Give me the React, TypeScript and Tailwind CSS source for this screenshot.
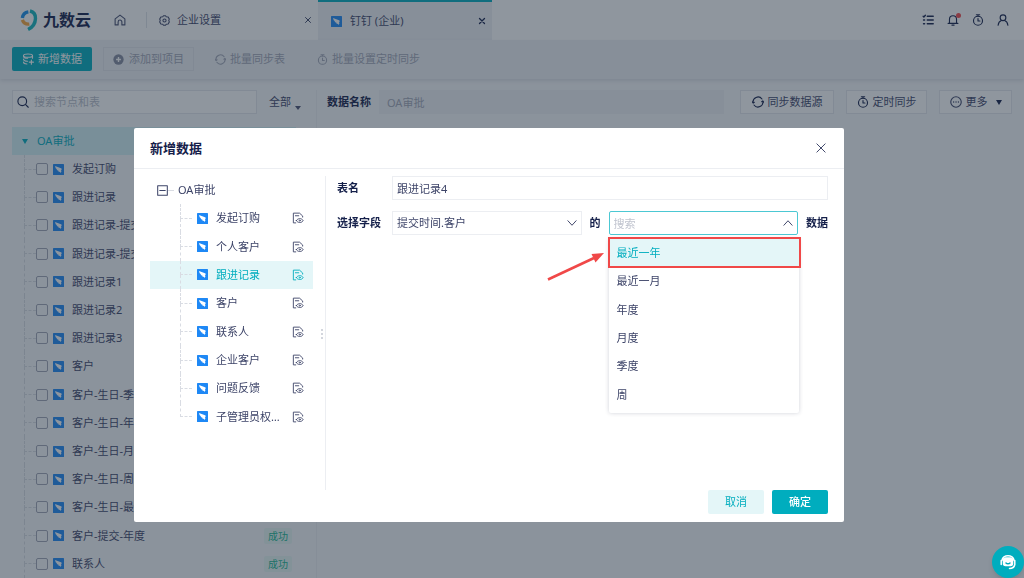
import React, { useState } from "react";
import clsx from "clsx";

type SourceTable = { name: string; status?: string };

const sourceTables: SourceTable[] = [
  { name: "发起订购" },
  { name: "跟进记录" },
  { name: "跟进记录-提交" },
  { name: "跟进记录-提交" },
  { name: "跟进记录1" },
  { name: "跟进记录2" },
  { name: "跟进记录3" },
  { name: "客户" },
  { name: "客户-生日-季度" },
  { name: "客户-生日-年度" },
  { name: "客户-生日-月度" },
  { name: "客户-生日-周" },
  { name: "客户-生日-最近" },
  { name: "客户-提交-年度", status: "成功" },
  { name: "联系人", status: "成功" },
];

const formTables = [
  "发起订购",
  "个人客户",
  "跟进记录",
  "客户",
  "联系人",
  "企业客户",
  "问题反馈",
  "子管理员权限申请",
];

const ranges = ["最近一年", "最近一月", "年度", "月度", "季度", "周"];

type IconProps = { className?: string; children: React.ReactNode };

const Icon = ({ className, children }: IconProps) => (
  <svg
    viewBox="0 0 16 16"
    fill="none"
    stroke="currentColor"
    strokeWidth="1.5"
    strokeLinecap="round"
    strokeLinejoin="round"
    aria-hidden="true"
    className={clsx("shrink-0", className)}
  >
    {children}
  </svg>
);

const SyncIcon = ({ className }: { className?: string }) => (
  <Icon className={className}>
    <path d="M1.5 9A6.600 6.600 0 0 1 13.300 4M14.500 7A6.600 6.600 0 0 1 2.700 12" />
    <path d="M0.500 7.800l1 1.600 1.600-1M15.500 8.200l-1-1.600-1.600 1" />
  </Icon>
);

const TimerIcon = ({ className }: { className?: string }) => (
  <Icon className={className}>
    <circle cx="8" cy="9" r="6" />
    <path d="M5.800 1h4.400M8 1v2M8 6v3.400h2.600" />
  </Icon>
);

// DingTalk source mark
const DingIcon = () => (
  <svg viewBox="0 0 11 11" aria-hidden="true" className="size-[11px] shrink-0">
    <rect width="11" height="11" rx="0.600" fill="#1e88f5" />
    <path d="M2 2L8 4.200C8.700 4.500 8.800 5 8.500 5.700L7.900 6.900 8.600 7.200 7.400 9 7 7.900 5.300 7.500 5.500 6.800 3.700 5.900 3.900 5.200 2.700 4.300z" fill="#fff" />
  </svg>
);

const FormIcon = () => (
  <Icon className="size-3">
    <path d="M5 14.500H1.800V1.500H10l4.200 3.800v1.500M4.500 5H9" strokeWidth="1.200" />
    <path d="M5.800 11.500c1.600-3.600 7.400-3.600 9 0-1.600 3.400-7.400 3.400-9 0z" strokeWidth="1.200" />
    <circle cx="10.300" cy="11.500" r="0.800" strokeWidth="1" />
  </Icon>
);

const Logo = () => (
  <div className="flex w-[70px] items-center gap-1 text-[#15204a]">
    <svg viewBox="0 0 20 24" aria-hidden="true" className="h-6 w-[19px] shrink-0">
      <path d="M2.500 9.800A7.500 7.500 0 0 1 8.800 3.500" fill="none" stroke="#1a8fe8" strokeWidth="3.600" />
      <path d="M2.500 11.800A7 7 0 0 0 9.800 16.300" fill="none" stroke="#f9a63a" strokeWidth="3.600" />
      <path d="M10.500 2.500C14.500 3.500 16.500 6.500 16.300 10.500C16.100 15.500 13.500 19.500 8.500 22" fill="none" stroke="#12b5bd" strokeWidth="3.600" />
    </svg>
    <span className="text-base font-bold whitespace-nowrap">九数云</span>
  </div>
);

// connector between the tree's trunk and one of its rows
const Branch = ({ last }: { last?: boolean }) => (
  <span className="flex w-3 shrink-0 flex-col self-stretch">
    <span className="flex-1 border-b border-l border-dashed border-[#d9dce3]" />
    <span className={clsx("flex-1 border-dashed border-[#d9dce3]", !last && "border-l")} />
  </span>
);

const Header = () => (
  <header className="flex h-10 items-stretch bg-white">
    <div className="flex w-[318px] items-center pr-1 pl-5">
      <Logo />
      <button type="button" aria-label="首页" className="ml-6 text-[#4a5172]">
        <Icon className="size-3">
          <path d="M1.500 6.500L8 1.500l6.500 5V14.500h-4V10.500a2.500 2.500 0 0 0-5 0v4h-4z" />
        </Icon>
      </button>
      <span className="ml-5 h-4 w-px bg-[#dfe2e8]" />
      <button type="button" className="ml-3 flex flex-1 items-center gap-[7px]">
        <Icon className="size-[11px]">
          <path d="M5.500 2.500L6.500 1h3l1 1.500 2.800.500L15 6l-.8 2 .8 2-1.700 3-2.800.500-1 1.500h-3l-1-1.500L2.700 13 1 10l.8-2L1 6l1.700-3z" />
          <circle cx="8" cy="8" r="2.300" />
        </Icon>
        企业设置
      </button>
      <button type="button" aria-label="关闭企业设置" className="p-0.5">
        <Icon className="size-2">
          <path d="M3 3l10 10M13 3L3 13" strokeWidth="2" />
        </Icon>
      </button>
    </div>
    <div className="flex w-[174px] items-center border-t-2 border-[#00adbe] bg-[#eef0f4] pr-1 pl-[13px]">
      <button type="button" className="flex flex-1 items-center gap-2">
        <DingIcon />
        钉钉 (企业)
      </button>
      <button type="button" aria-label="关闭钉钉" className="p-0.5 text-[#15204a]">
        <Icon className="size-2">
          <path d="M3 3l10 10M13 3L3 13" strokeWidth="2.600" />
        </Icon>
      </button>
    </div>
    <div className="flex flex-1 items-center justify-end gap-[13px] pr-[15px] text-[#15204a]">
      <button type="button" aria-label="任务列表">
        <Icon className="size-3">
          <path d="M7 3h8M7 8h8M7 13h8M1.500 3l1 1 2-2.300M2 8h1.500M2 13h1.500" strokeWidth="1.800" />
        </Icon>
      </button>
      <button type="button" aria-label="消息" className="relative">
        <Icon className="size-3">
          <path d="M1.500 12.500h13M3.300 12.500V7a4.700 4.700 0 0 1 9.400 0v5.500M6.500 14.800h3" />
        </Icon>
        <span className="absolute -top-px -right-0.5 size-[5px] rounded-full bg-[#f5494b]" />
      </button>
      <button type="button" aria-label="定时任务">
        <TimerIcon className="size-3" />
      </button>
      <button type="button" aria-label="账户">
        <Icon className="size-3">
          <circle cx="8" cy="5" r="3.800" />
          <path d="M1.500 15c.4-3.500 2-5.600 4.400-6.400M14.500 15c-.4-3.500-2-5.600-4.400-6.400" />
        </Icon>
      </button>
    </div>
  </header>
);

const Toolbar = () => (
  <div className="flex h-[39px] items-center bg-[#eef0f4] px-3 pb-px text-[#a2a6b6] shadow-[0_2px_4px_rgba(40,50,80,0.12)]">
    <button type="button" className="flex h-6 w-20 items-center justify-center gap-1 rounded-xs bg-[#00adbe] text-white">
      <Icon className="size-3">
        <ellipse cx="8" cy="3.500" rx="6" ry="2.200" />
        <path d="M14 3.500v3.500M2 3.500c0 3 2 3.500 5.500 3.500M2 8c0 2.500 2 3 5.500 3M2 12c0 2 2 2.600 4.500 2.600M12.500 9.500v5.500M9.800 12.200h5.400" />
      </Icon>
      新增数据
    </button>
    <button type="button" className="ml-[11px] flex h-6 w-[91px] items-center justify-center gap-[5px] border border-[#e2e5ea]">
      <svg viewBox="0 0 16 16" aria-hidden="true" className="size-[11px] shrink-0">
        <circle cx="8" cy="8" r="7.500" fill="#858b9e" />
        <path d="M8 4.500v7M4.500 8h7" stroke="#fff" strokeWidth="2" />
      </svg>
      添加到项目
    </button>
    <button type="button" className="ml-[21px] flex items-center gap-1">
      <SyncIcon className="size-[11px]" />
      批量同步表
    </button>
    <button type="button" className="ml-8 flex items-center gap-1">
      <TimerIcon className="size-[11px]" />
      批量设置定时同步
    </button>
  </div>
);

const Sidebar = () => (
  <aside className="flex w-[317px] flex-col border-r border-[#eceef2] pl-3">
    <div className="flex h-6 items-center">
      <div className="flex h-6 w-[245px] items-center gap-[5px] border border-[#e4e7ec] bg-white px-1">
        <Icon className="size-3 text-[#15204a]">
          <circle cx="7" cy="7" r="5.800" />
          <path d="M11.500 11.500l3.500 3.500" />
        </Icon>
        <input aria-label="搜索节点和表" placeholder="搜索节点和表" className="min-w-0 flex-1 outline-none placeholder:text-[#b8bcc8]" />
      </div>
      <button type="button" className="ml-3 flex items-center gap-1">
        全部
        <svg viewBox="0 0 6 4" aria-hidden="true" className="mt-3 h-1 w-1.5">
          <path d="M0 0h6L3 4z" fill="#4a5172" />
        </svg>
      </button>
    </div>
    <button type="button" className="mt-[13px] mr-5 flex h-7 shrink-0 items-center gap-2 bg-[#d3f0f4] pl-[9px] text-[#00adbe]">
      <svg viewBox="0 0 8 5" aria-hidden="true" className="h-[5px] w-2">
        <path d="M1 0h6L4 5z" fill="currentColor" />
      </svg>
      OA审批
    </button>
    <ul className="grid flex-1 auto-rows-fr">
      {sourceTables.map(({ name, status }, i) => (
        <li key={i} className="flex items-center pr-6 pl-3">
          <Branch />
          <label className="flex flex-1 items-center">
            <input type="checkbox" className="size-3 appearance-none rounded-xs border border-[#a0a5b5]" />
            <span className="ml-[5px]">
              <DingIcon />
            </span>
            <span className="ml-2">{name}</span>
          </label>
          {status && (
            <span className="rounded-xs bg-[#e6f6f2] px-1 text-[10px] leading-4 text-[#18b892]">{status}</span>
          )}
        </li>
      ))}
    </ul>
  </aside>
);

const SourceBar = () => (
  <section className="flex h-6 flex-1 items-center pr-3 pl-2.5">
    <label htmlFor="source" className="font-bold text-[#15204a]">
      数据名称
    </label>
    <input
      id="source"
      defaultValue="OA审批"
      disabled
      className="ml-2 h-6 min-w-0 flex-1 bg-[#eef0f4] px-2 text-[#a2a6b6]"
    />
    <button type="button" className="ml-4 flex h-6 w-[94px] items-center justify-center gap-1 border border-[#e4e7ec] bg-white">
      <SyncIcon className="size-3 text-[#15204a]" />
      同步数据源
    </button>
    <button type="button" className="ml-3 flex h-6 w-[81px] items-center justify-center gap-1 border border-[#e4e7ec] bg-white">
      <TimerIcon className="size-3 text-[#15204a]" />
      定时同步
    </button>
    <button type="button" className="ml-3 flex h-6 w-[73px] items-center justify-center gap-1 border border-[#e4e7ec] bg-white">
      <Icon className="size-3">
        <circle cx="8" cy="8" r="7" />
        <path d="M4.800 8h.1M8 8h.1M11.200 8h.1" strokeWidth="1.800" />
      </Icon>
      更多
      <svg viewBox="0 0 6 5" aria-hidden="true" className="ml-1 h-[5px] w-1.5">
        <path d="M0 0h6L3 5z" fill="#15204a" />
      </svg>
    </button>
  </section>
);

const AddDataDialog = () => {
  const [table, setTable] = useState("跟进记录");
  const [range, setRange] = useState("最近一年");

  return (
    <div className="fixed inset-0 flex items-start bg-[#1f2d3d]/50 pt-32 pl-[134px]">
      <div role="dialog" aria-labelledby="dialog-title" className="w-[710px] rounded-xs bg-white">
        <div className="flex h-[41px] items-center justify-between border-b border-[#eceef2] px-4">
          <h2 id="dialog-title" className="text-[13px] font-bold text-[#15204a]">
            新增数据
          </h2>
          <button type="button" aria-label="关闭" className="p-px">
            <Icon className="size-3">
              <path d="M2.500 2.500l11 11M13.500 2.500l-11 11" strokeWidth="1.300" />
            </Icon>
          </button>
        </div>

        <div className="flex h-[321px] pt-[7px]">
          <div className="relative w-48 border-r border-[#eceef2] pl-4">
            <div className="flex h-7 items-center pl-[7px]">
              <Icon className="size-[11px]">
                <path d="M1 1h14v14H1zM4 8h8" />
              </Icon>
              <span className="mr-1 w-1.5 border-t border-dashed border-[#d9dce3]" />
              OA审批
            </div>
            <ul className="mr-3 grid h-[227px] auto-rows-fr">
              {formTables.map((name, i) => (
                <li key={name} className={clsx("flex", name === table && "bg-[#e4f6f8] text-[#00adbe]")}>
                  <button type="button" onClick={() => setTable(name)} className="flex w-full items-center pr-2 pl-[30px]">
                    <Branch last={i === formTables.length - 1} />
                    <span className="ml-[5px]">
                      <DingIcon />
                    </span>
                    <span className="mr-2 ml-2 w-[68px] truncate text-left">{name}</span>
                    <FormIcon />
                  </button>
                </li>
              ))}
            </ul>
            <span className="absolute top-[153px] right-0.5 flex flex-col gap-0.5">
              <i className="size-0.5 bg-[#d3d6dd]" />
              <i className="size-0.5 bg-[#d3d6dd]" />
              <i className="size-0.5 bg-[#d3d6dd]" />
            </span>
          </div>

          <form className="flex flex-1 flex-col gap-[11px] pr-4 pl-[11px]">
            <div className="flex h-6 items-center">
              <label htmlFor="name" className="w-[55px] font-bold text-[#15204a]">
                表名
              </label>
              <input id="name" defaultValue="跟进记录4" className="h-6 min-w-0 flex-1 border border-[#eceef2] px-1 outline-none" />
            </div>
            <div className="flex h-6 items-center">
              <label htmlFor="field" className="w-[55px] font-bold text-[#15204a]">
                选择字段
              </label>
              <div className="relative flex-1">
                <select id="field" className="h-6 w-full appearance-none border border-[#eceef2] px-1 outline-none">
                  <option>提交时间.客户</option>
                </select>
                <Icon className="pointer-events-none absolute top-1.5 right-1 size-3">
                  <path d="M2.500 5L8 11l5.500-6" strokeWidth="1.300" />
                </Icon>
              </div>
              <label htmlFor="range" className="mx-2 font-bold text-[#15204a]">
                的
              </label>
              <div className="relative flex-1">
                <input
                  id="range"
                  role="combobox"
                  aria-expanded="true"
                  aria-controls="range-list"
                  placeholder="搜索"
                  className="h-6 w-full rounded-xs border border-[#4cc8d3] px-1 outline-none placeholder:text-[#c0c4cf]"
                />
                <Icon className="pointer-events-none absolute top-1.5 right-1 size-3">
                  <path d="M2.500 11L8 5l5.500 6" strokeWidth="1.300" />
                </Icon>
                <ul
                  id="range-list"
                  role="listbox"
                  className="absolute top-7 left-0 grid h-[174px] w-[190px] auto-rows-fr rounded-xs bg-white pb-1 shadow-[0_0_4px_rgba(40,50,80,0.22)]"
                >
                  {ranges.map((item) => (
                    <li
                      key={item}
                      role="option"
                      aria-selected={item === range}
                      onClick={() => setRange(item)}
                      className={clsx("flex items-center px-2", item === range && "bg-[#e4f6f8] text-[#00adbe]")}
                    >
                      {item}
                    </li>
                  ))}
                </ul>
                {/* callout around the first option */}
                <span className="pointer-events-none absolute top-[26px] -left-px h-[31px] w-[193px] border-2 border-[#f04848]" />
                <svg viewBox="0 0 60 32" aria-hidden="true" className="pointer-events-none absolute top-10 -left-16 h-8 w-[60px]">
                  <path d="M3 28.500L49 7" stroke="#f04848" strokeWidth="2.600" />
                  <path d="M46.500 3L59 2 50.500 11.500z" fill="#f04848" />
                </svg>
              </div>
              <span className="ml-2 font-bold text-[#15204a]">数据</span>
            </div>
          </form>
        </div>

        <div className="flex justify-end gap-2 px-4 pb-2">
          <button type="button" className="h-6 w-14 rounded-xs bg-[#e4f6f8] text-[#00adbe]">
            取消
          </button>
          <button type="button" className="h-6 w-14 rounded-xs bg-[#00adbe] font-medium text-white">
            确定
          </button>
        </div>
      </div>
    </div>
  );
};

const App = () => {
  return (
    <div className="flex h-screen flex-col overflow-hidden bg-[#f7f8fa] font-['Noto_Sans','Noto_Sans_CJK_SC',sans-serif] text-[11px] leading-4 text-[#3d4468]">
      <Header />
      <Toolbar />
      <main className="flex flex-1 pt-[11px]">
        <Sidebar />
        <SourceBar />
      </main>
      <AddDataDialog />
      <button
        type="button"
        aria-label="在线客服"
        className="fixed right-0 bottom-0 flex size-8 items-center justify-center rounded-full bg-[#00adbe] text-white shadow-md"
      >
        <Icon className="size-4">
          <rect x="3.500" y="4" width="9" height="7.500" rx="2" fill="currentColor" />
          <path d="M2 6.500C2.500 0 13.500 0 14 6.500M1.200 6.500v4M14.800 6.500v4c-.5 2.500-2.500 4-5.300 4" />
          <path d="M6 9c1 1 3 1 4 0" stroke="#00adbe" />
        </Icon>
      </button>
    </div>
  );
};

export default App;
